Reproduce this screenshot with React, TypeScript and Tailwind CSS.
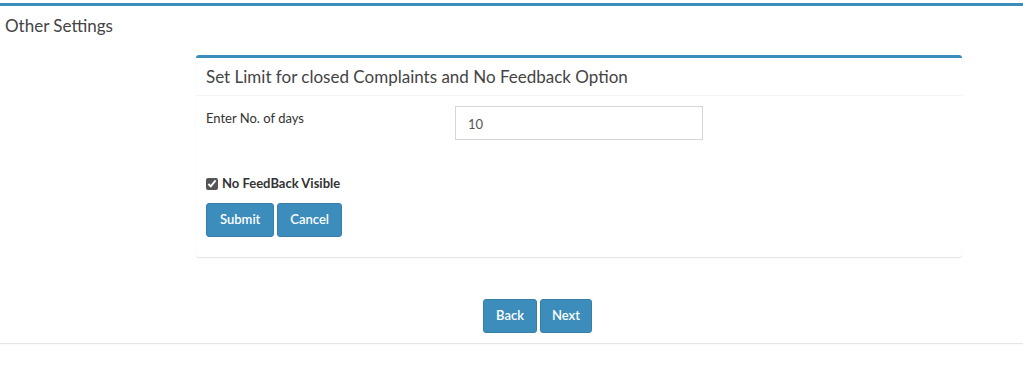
export default function App() {
  return (
    <main className="min-h-[365px] bg-white pt-[3px] font-['Lato','Open_Sans',sans-serif] text-[#333]">
      {/* OUTER BOX */}
      <section className="border-t-[3px] border-[#3c8dbc] shadow-[0_1px_1px_rgba(0,0,0,0.1)] pb-[10px]">
        <div className="px-[5px] pt-[8px] h-[40px]">
          <h3 className="text-[17px] leading-[24px] text-[#444]">Other Settings</h3>
        </div>

        {/* INNER BOX */}
        <div className="ml-[196px] w-[766px] mt-[9px] rounded-[3px] border-t-[3px] border-[#3c8dbc] shadow-[0_1px_1px_rgba(0,0,0,0.12)]">
          <div className="h-[38px] px-[10px] flex items-center border-b border-[#f4f4f4]">
            <h4 className="text-[17px] text-[#444]">
              Set Limit for closed Complaints and No Feedback Option
            </h4>
          </div>

          <div className="px-[10px] pt-[10px] pb-[20px]">
            <div className="flex">
              <label className="w-[249px] text-[13px] pt-[3px] text-[#333]">Enter No. of days</label>
              <input
                defaultValue="10"
                className="w-[248px] h-[34px] border border-[#d2d6de] px-[12px] pt-[1px] text-[13px] text-[#555] outline-none"
              />
            </div>

            <label className="mt-[34px] flex items-center gap-[4px] text-[13px] font-bold text-[#333]">
              <input type="checkbox" defaultChecked className="w-[12px] h-[12px] accent-[#555]" />
              No FeedBack Visible
            </label>

            <div className="mt-[9px] flex gap-[3px]">
              <button className="h-[34px] px-[13px] rounded-[3px] bg-[#3c8dbc] border border-[#367fa9] text-white text-[13px] font-semibold">
                Submit
              </button>
              <button className="h-[34px] px-[12px] rounded-[3px] bg-[#3c8dbc] border border-[#367fa9] text-white text-[13px] font-semibold">
                Cancel
              </button>
            </div>
          </div>
        </div>

        {/* NAV BUTTONS */}
        <div className="mt-[42px] ml-[483px] flex gap-[3px]">
          <button className="h-[34px] px-[12px] rounded-[3px] bg-[#3c8dbc] border border-[#367fa9] text-white text-[13px] font-semibold">
            Back
          </button>
          <button className="h-[34px] px-[11px] rounded-[3px] bg-[#3c8dbc] border border-[#367fa9] text-white text-[13px] font-semibold">
            Next
          </button>
        </div>
      </section>
    </main>
  );
}
